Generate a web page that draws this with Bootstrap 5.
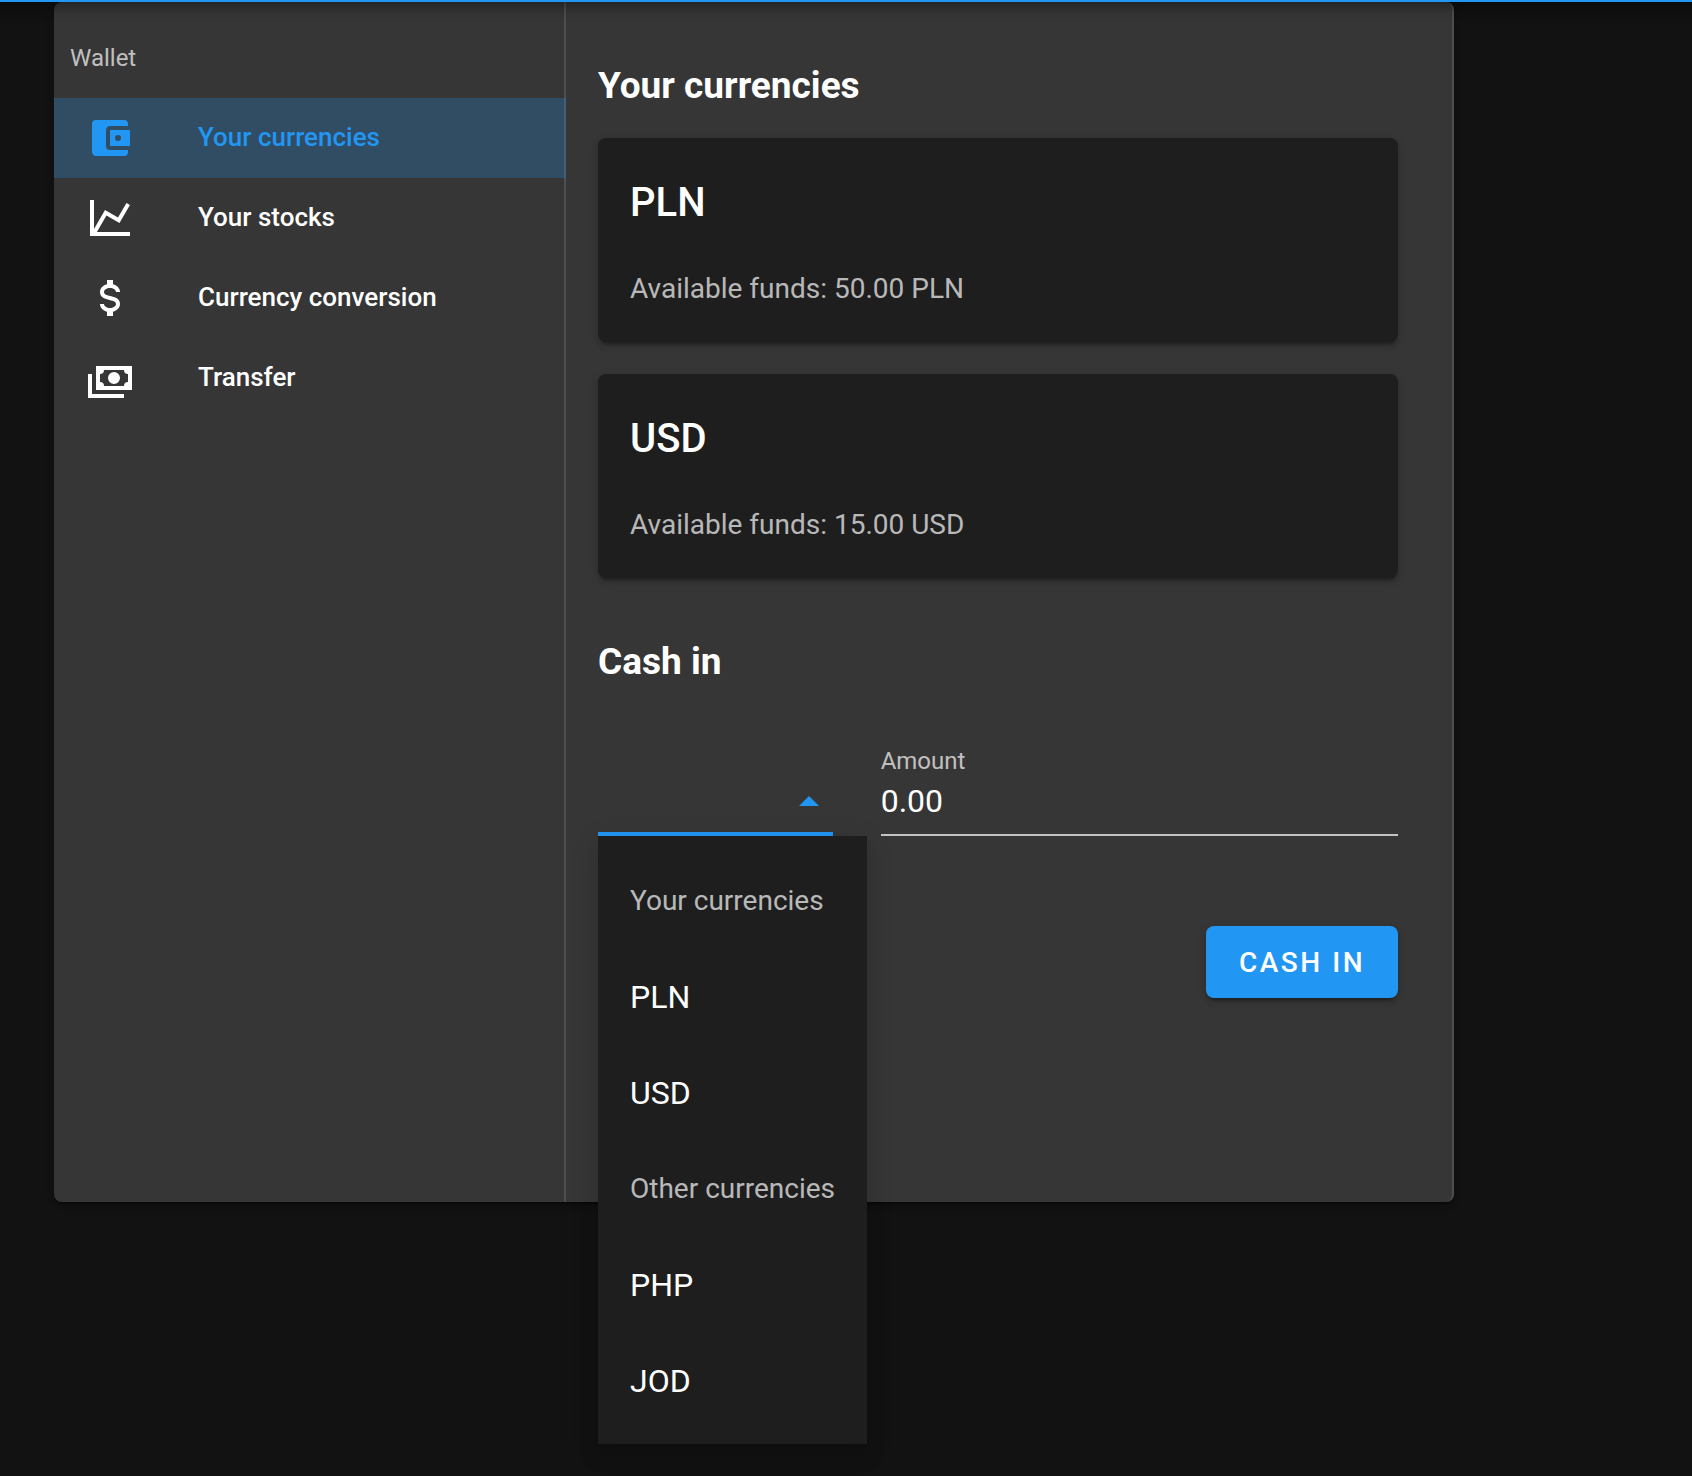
<!DOCTYPE html>
<html lang="en">
<head>
<meta charset="utf-8">
<meta name="viewport" content="width=device-width, initial-scale=1">
<title>Wallet</title>
<link href="https://cdn.jsdelivr.net/npm/bootstrap@5.3.0/dist/css/bootstrap.min.css" rel="stylesheet">
<style>
  :root { --accent: #2196f3; --muted: rgba(255,255,255,.7); --line: rgba(255,255,255,.12); }
  body { background: #121212; color: #fff; font-family: Roboto, sans-serif; font-size: 28px; min-height: 100vh; }
  .topbar { height: 2px; background: var(--accent); z-index: 5; box-shadow: 0 -56px 8px 58px rgba(0,0,0,.2), 0 -52px 10px 60px rgba(0,0,0,.14), 0 -58px 20px 60px rgba(0,0,0,.12); }
  .shell { max-width: 1400px; min-height: 1200px; margin-left: 54px; background: #363636; border-radius: 8px; box-shadow: 0 6px 2px -4px rgba(0,0,0,.2), 0 4px 4px rgba(0,0,0,.14), 0 2px 10px rgba(0,0,0,.12); }
  .side { flex: 0 0 512px; padding-top: 16px; border-right: 2px solid var(--line); }
  .side-title { height: 80px; padding: 0 16px; font-size: 24px; line-height: 80px; color: var(--muted); margin: 0; }
  .side-link { height: 80px; padding: 0 32px; gap: 64px; font-size: 26px; font-weight: 500; line-height: 32px; color: #fff; text-decoration: none; }
  .side-link span { padding-bottom: 2px; }
  .side-link.active { color: var(--accent); background: rgba(33,150,243,.24); margin-right: -2px; }
  .glyph { width: 48px; height: 48px; fill: currentColor; flex: none; }
  .content { padding: 56px 54px 32px 32px; border-right: 2px solid var(--line); border-radius: 0 8px 8px 0; min-width: 0; }
  .heading { font-size: 37px; line-height: 56px; font-weight: 700; margin: 0 0 24px; }
  .funds { background: #1e1e1e; color: #fff; border: 0; border-radius: 8px; padding: 32px 32px 30px; gap: 30px; margin-bottom: 32px; box-shadow: 0 6px 2px -4px rgba(0,0,0,.2), 0 4px 4px rgba(0,0,0,.14), 0 2px 10px rgba(0,0,0,.12); }
  .funds h3 { font-size: 40px; line-height: 66px; font-weight: 500; margin: 0; }
  .funds p { font-size: 28px; line-height: 46px; color: var(--muted); margin: 0; }
  .section-gap { margin-top: 56px; }
  .fields { padding-top: 35px; }
  .field-label { display: block; font-size: 24px; line-height: 24px; color: var(--muted); }
  .line-input { display: block; width: 100%; height: 63px; padding: 0 0 5px; background: transparent; color: #fff; border: 0; border-bottom: 2px solid rgba(255,255,255,.7); border-radius: 0; font-size: 32px; outline: 0; appearance: none; }
  .line-select { border-bottom: 4px solid var(--accent); }
  .arrow { right: 0; bottom: 12px; color: var(--accent); pointer-events: none; }
  .options { top: 100%; left: 0; z-index: 8; width: max-content; padding: 17px 0 15px; background: #1e1e1e; box-shadow: 0 10px 10px -6px rgba(0,0,0,.1), 0 16px 20px 2px rgba(0,0,0,.06), 0 6px 28px 4px rgba(0,0,0,.06); }
  .options-title, .options-item { display: block; width: 100%; height: 96px; line-height: 96px; padding: 0 32px; text-align: left; border: 0; background: transparent; }
  .options-title { font-size: 28px; color: var(--muted); }
  .options-item { font-size: 32px; color: #fff; }
  .submit { height: 72px; min-width: 192px; padding: 2px 32px 0; background: var(--accent); color: #fff; border: 0; border-radius: 8px; font-size: 28px; font-weight: 500; letter-spacing: .09em; margin-top: 90px; box-shadow: 0 6px 2px -4px rgba(0,0,0,.2), 0 4px 4px rgba(0,0,0,.14), 0 2px 10px rgba(0,0,0,.12); }
</style>
<script src="https://cdn.jsdelivr.net/npm/bootstrap@5.3.0/dist/js/bootstrap.bundle.min.js"></script>
</head>
<body>
<header class="topbar position-relative"></header>
<div class="shell d-flex">
  <nav class="side" aria-label="Wallet">
    <h1 class="side-title fw-normal">Wallet</h1>
    <a href="#" class="side-link active d-flex align-items-center" aria-current="page">
      <svg class="glyph" viewBox="0 0 24 24" aria-hidden="true"><path d="M21,18V19A2,2 0 0,1 19,21H5C3.89,21 3,20.1 3,19V5A2,2 0 0,1 5,3H19A2,2 0 0,1 21,5V6H12C10.89,6 10,6.9 10,8V16A2,2 0 0,0 12,18M12,16H22V8H12M16,13.5A1.5,1.5 0 0,1 14.5,12A1.5,1.5 0 0,1 16,10.5A1.5,1.5 0 0,1 17.5,12A1.5,1.5 0 0,1 16,13.5Z"/></svg>
      <span>Your currencies</span>
    </a>
    <a href="#" class="side-link d-flex align-items-center">
      <svg class="glyph" viewBox="0 0 24 24" aria-hidden="true"><path d="M16,11.78L20.24,4.45L21.97,5.45L16.74,14.5L10.23,10.75L5.46,19H22V21H2V3H4V17.54L9.5,8L16,11.78Z"/></svg>
      <span>Your stocks</span>
    </a>
    <a href="#" class="side-link d-flex align-items-center">
      <svg class="glyph" viewBox="0 0 24 24" aria-hidden="true"><path d="M7,15H9C9,16.08 10.37,17 12,17C13.63,17 15,16.08 15,15C15,13.9 13.96,13.5 11.76,12.97C9.64,12.44 7,11.78 7,9C7,7.21 8.47,5.69 10.5,5.18V3H13.5V5.18C15.53,5.69 17,7.21 17,9H15C15,7.92 13.63,7 12,7C10.37,7 9,7.92 9,9C9,10.1 10.04,10.5 12.24,11.03C14.36,11.56 17,12.22 17,15C17,16.79 15.53,18.31 13.5,18.82V21H10.5V18.82C8.47,18.31 7,16.79 7,15Z"/></svg>
      <span>Currency conversion</span>
    </a>
    <a href="#" class="side-link d-flex align-items-center">
      <svg class="glyph" viewBox="0 0 24 24" aria-hidden="true"><path d="M5,6H23V18H5V6M14,9A3,3 0 0,1 17,12A3,3 0 0,1 14,15A3,3 0 0,1 11,12A3,3 0 0,1 14,9M9,8A2,2 0 0,1 7,10V14A2,2 0 0,1 9,16H19A2,2 0 0,1 21,14V10A2,2 0 0,1 19,8H9M1,10H3V20H19V22H1V10Z"/></svg>
      <span>Transfer</span>
    </a>
  </nav>
  <main class="content flex-grow-1">
    <h2 class="heading">Your currencies</h2>
    <article class="card funds">
      <h3>PLN</h3>
      <p>Available funds: 50.00 PLN</p>
    </article>
    <article class="card funds mb-0">
      <h3>USD</h3>
      <p>Available funds: 15.00 USD</p>
    </article>
    <form class="section-gap" onsubmit="return false">
      <h2 class="heading">Cash in</h2>
      <div class="row gx-5 fields align-items-end">
        <div class="col-4">
          <div class="position-relative">
            <select class="line-input line-select" id="currency" aria-label="Currency"><option value=""></option></select>
            <svg class="glyph arrow position-absolute" viewBox="0 0 24 24" aria-hidden="true"><path d="M7,15L12,10L17,15H7Z"/></svg>
            <div class="options position-absolute" role="listbox" aria-label="Currency">
              <div class="options-title">Your currencies</div>
              <button type="button" class="options-item" role="option">PLN</button>
              <button type="button" class="options-item" role="option">USD</button>
              <div class="options-title">Other currencies</div>
              <button type="button" class="options-item" role="option">PHP</button>
              <button type="button" class="options-item" role="option">JOD</button>
            </div>
          </div>
        </div>
        <div class="col-8">
          <label class="field-label" for="amount">Amount</label>
          <input class="line-input" id="amount" type="text" inputmode="decimal" value="0.00">
        </div>
      </div>
      <div class="d-flex justify-content-end">
        <button type="submit" class="submit text-uppercase">Cash in</button>
      </div>
    </form>
  </main>
</div>
</body>
</html>
